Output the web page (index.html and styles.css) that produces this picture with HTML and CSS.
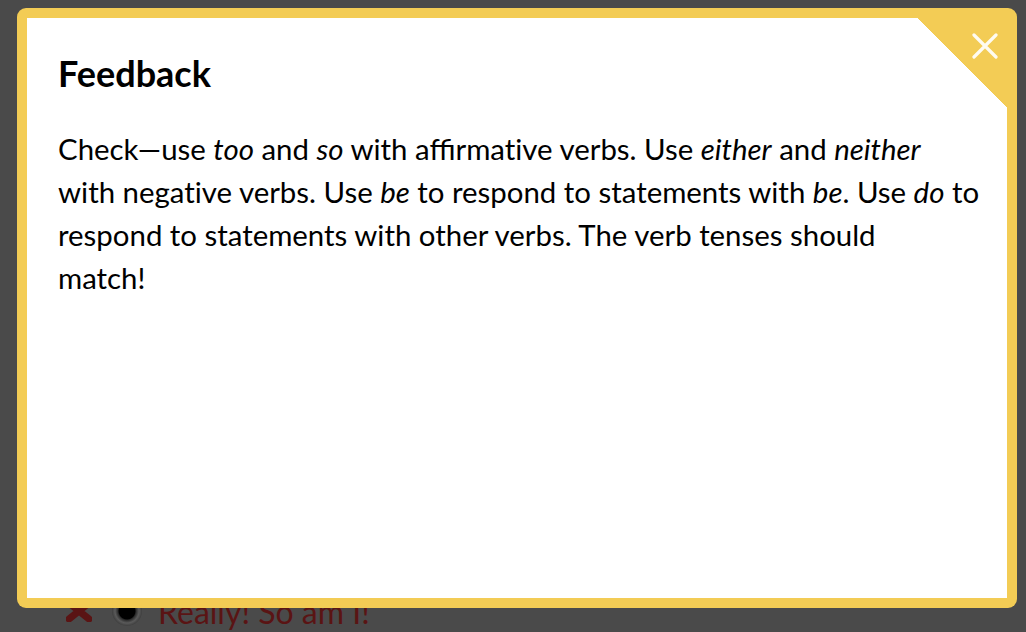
FILE: index.html
```html
<!DOCTYPE html>
<html lang="en">
<head>
<meta charset="utf-8">
<title>Feedback</title>
<link rel="stylesheet" href="styles.css">
</head>
<body>
<div class="page">
  <div class="answer-row">
    <svg class="wrong-icon" width="26" height="22" viewBox="0 0 26 22"><path d="M3 3 L23 19 M23 3 L3 19" stroke="#5a1414" stroke-width="7" stroke-linecap="round"/></svg>
    <span class="radio"></span>
    <span class="answer-text">Really! So am I!</span>
  </div>
</div>
<div class="modal">
  <div class="modal-inner">
    <div class="corner">
      <svg class="close" width="26" height="26" viewBox="0 0 26 26"><path d="M2 2 L24 24 M24 2 L2 24" stroke="#fff" stroke-opacity="0.92" stroke-width="3.2" stroke-linecap="round"/></svg>
    </div>
    <h2 class="title">Feedback</h2>
    <p class="message">Check—use <em>too</em> and <em>so</em> with affirmat&zwnj;ive verbs. Use <em>either</em> and <em>neither</em> with negat&zwnj;ive verbs. Use <em>be</em> to respond to statements with <em>be</em>. Use <em>do</em> to respond to statements with other verbs. The verb tenses should<br>match!</p>
  </div>
</div>
</body>
</html>
```

FILE: styles.css
```css
html, body {
  margin: 0;
  padding: 0;
  width: 1026px;
  height: 632px;
  overflow: hidden;
  background: #4a4a4a;
  font-family: Lato, "Open Sans", sans-serif;
}

.page {
  padding-top: 588px;
  padding-left: 66px;
}

.answer-row {
  display: flex;
  align-items: center;
  gap: 20px;
  height: 46px;
}

.wrong-icon {
  flex: none;
}

.radio {
  flex: none;
  width: 30px;
  height: 30px;
  border-radius: 50%;
  background: radial-gradient(circle, #000 0 8px, #2a2a2a 9px, #5a5a5a 12px, #3e3e3e 15px);
}

.answer-text {
  color: #5a1414;
  font-size: 32px;
  margin-left: -4px;
}

.modal {
  position: absolute;
  left: 17px;
  top: 8px;
  width: 1000px;
  height: 600px;
  box-sizing: border-box;
  background: #f3cc55;
  border-radius: 9px;
  padding: 10px;
}

.modal-inner {
  position: relative;
  height: 100%;
  background: #fff;
  box-sizing: border-box;
  padding: 34px 25px 0 31px;
  overflow: hidden;
}

.corner {
  position: absolute;
  top: 0;
  right: 0;
  width: 90px;
  height: 90px;
  background: linear-gradient(to bottom left, #f3cc55 50%, transparent 50%);
}

.close {
  position: absolute;
  top: 15px;
  right: 9px;
}

.title {
  margin: 0;
  font-size: 36px;
  font-weight: 700;
  line-height: 42px;
  color: #000;
}

.message {
  margin: 33px 0 0;
  font-size: 29.4px;
  line-height: 43px;
  color: #000;
}

.message em {
  font-style: italic;
}
```
